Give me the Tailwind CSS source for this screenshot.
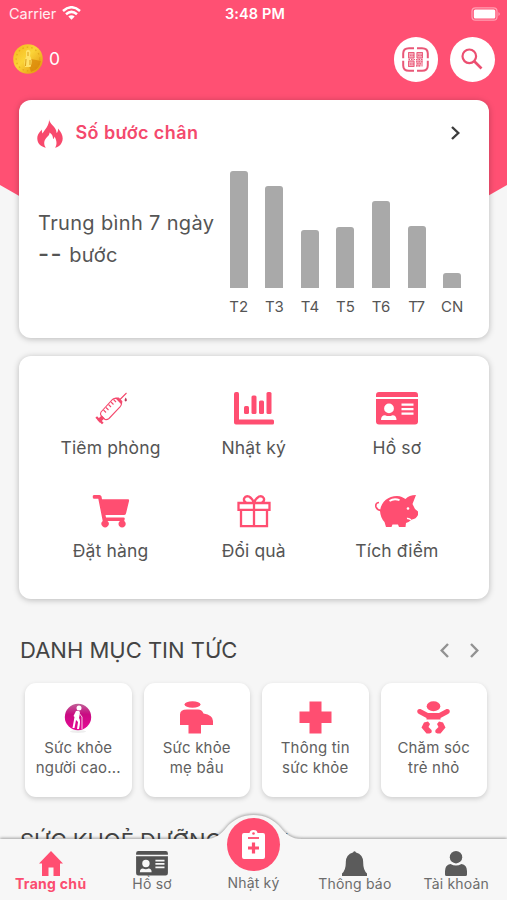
<!DOCTYPE html>
<html lang="vi">
<head>
<meta charset="utf-8">
<meta name="viewport" content="width=device-width, initial-scale=1">
<title>Trang chủ</title>
<script src="https://cdn.jsdelivr.net/npm/@tailwindcss/browser@4"></script>
</head>
<body class="bg-[#f6f6f6] overflow-hidden">
<svg class="hidden">
  <defs>
    <symbol id="idcard" viewBox="0 0 42 33">
      <path fill-rule="evenodd" d="M3 0H39Q42 0 42 3V5H0V3Q0 0 3 0ZM0 7H42V29.500Q42 32.500 39 32.500H3Q0 32.500 0 29.500ZM13 11.500A4.900 4.900 0 1 0 13 21.300A4.900 4.900 0 1 0 13 11.500ZM5 28H20.500Q20.500 23.200 16.500 23.200Q13 25 9 23.200Q5 23.200 5 28ZM25.500 11.500V13.700H37.500V11.500ZM25.500 16V18.200H37.500V16ZM25.500 20.500V22.700H37.500V20.500Z"/>
    </symbol>
  </defs>
</svg>
<div class="relative w-[507px] h-[900px] overflow-hidden font-['Inter','Liberation_Sans',sans-serif] text-[#555]">
  <div class="absolute inset-x-0 top-0 h-[330px] bg-[#ff5073] [clip-path:polygon(0_0,100%_0,100%_185px,50%_330px,0_185px)]"></div>

  <div class="relative flex flex-col">
    <header class="h-[100px] text-white">
      <div class="h-7 flex items-center justify-between pl-[9px] pr-[6px]">
        <div class="w-[100px] flex items-center gap-[6px] text-[14.500px] leading-7 text-white/90">
          <span class="tracking-[-0.050px]">Carrier</span>
          <svg class="w-[19px] h-[14px] -mt-[2px]" viewBox="0 0 19 14" fill="none" stroke="#fff" stroke-width="2.500"><path d="M1 5Q9.500-2.500 18 5M4 8.300Q9.500 3.500 15 8.300"/><path d="M6.300 10.600Q9.500 8 12.700 10.600L9.500 13.800Z" fill="#fff" stroke="none"/></svg>
        </div>
        <span class="text-[14.500px] font-semibold tracking-[0.15px]">3:48 PM</span>
        <div class="w-[100px] flex justify-end">
          <svg class="w-[30px] h-[14px]" viewBox="0 0 30 14"><rect x="1" y=".8" width="25" height="12.400" rx="3.500" fill="none" stroke="#fff" stroke-opacity=".45" stroke-width="1.200"/><rect x="2.800" y="2.500" width="21.500" height="9" rx="1.500" fill="#fff"/><path d="M27.500 5Q30 7 27.500 9Z" fill="#fff" fill-opacity=".5"/></svg>
        </div>
      </div>
      <div class="flex items-center pl-[13px] pr-[12.500px] pt-[9px]">
        <svg class="w-[30px] h-[30px]" viewBox="0 0 30 30">
          <defs><linearGradient id="gold" x1="0" y1="0" x2="1" y2="1"><stop offset="0" stop-color="#f3b51c"/><stop offset=".45" stop-color="#fbd438"/><stop offset="1" stop-color="#df8c05"/></linearGradient></defs>
          <circle cx="15" cy="15" r="14.800" fill="url(#gold)"/>
          <circle cx="15" cy="15" r="11.800" fill="none" stroke="#d99a13" stroke-opacity=".6" stroke-width="1.300" stroke-dasharray="1.500 3"/>
          <path d="M18 15L28 17A14 14 0 0 1 18 28L16 22Z" fill="#d98508" opacity=".7"/>
          <path d="M13 7Q16 4 17.500 8L17 12Q20 16 17.500 23H12Q10.500 17 13 13Z" fill="#ffe26a"/>
          <path d="M15 8V12M13 15L12.500 22M17 16V21" stroke="#dba016" stroke-width="1" fill="none"/>
        </svg>
        <span class="ml-[6px] text-[17.500px] leading-6">0</span>
        <div class="ml-auto flex gap-3">
          <div class="size-[44.500px] rounded-full bg-white grid place-items-center">
            <svg class="w-[27px] h-[25px]" viewBox="0 0 27 25" fill="none" stroke="#e95777">
              <path stroke-width="2" d="M12 1.200H7Q1.200 1.200 1.200 6.500V11.200M15 1.200H20Q25.800 1.200 25.800 6.500V11.200M12 23.800H7Q1.200 23.800 1.200 18.500V13.800M15 23.800H20Q25.800 23.800 25.800 18.500V13.800"/>
              <path fill="#f5a9b9" stroke="none" d="M6 5H12.500V11.500H6ZM14.500 5H21V11.500H14.500ZM6 13.500H12.500V20H6ZM14 12.500H21V19.500H14Z"/>
              <path stroke-width=".9" d="M6.500 5.500H12V11H6.500ZM15 5.500H20.500V11H15ZM6.500 14H12V19.500H6.500Z"/>
              <path stroke-width="1.100" stroke-dasharray="1.500 1" d="M8 8.200H12M16 8.200H20M8 17H12M6.500 12.500H21M14 14.700H21M15 16.700H20M14 18.900H19"/>
            </svg>
          </div>
          <div class="size-[44.500px] rounded-full bg-white grid place-items-center">
            <svg class="size-[22px]" viewBox="0 0 22 22" fill="none" stroke="#ec4f71"><circle cx="8.300" cy="8.300" r="6.800" stroke-width="2.200"/><path d="M13 13L20.500 20.500" stroke-width="2.700"/></svg>
          </div>
        </div>
      </div>
    </header>

    <section class="mx-[19px] h-[238px] w-[469.500px] rounded-[12px] bg-white shadow-[0_1px_6px_rgba(0,0,0,0.25)]">
      <div class="h-[66px] flex items-center pl-[18px] pr-[28.500px]">
        <svg class="w-[26px] h-[29px]" viewBox="0 0 26 29" fill="#f8496c"><path d="M12 0C12 5 20 8 19.500 14C20.800 13 21.200 11.500 21 9.500C25.500 14 27 20 24.500 24C23 27 20.500 28.200 18 28.800C20.500 25 19.500 21 17.500 17.500C17.300 19 16.700 19.700 16 20C16.200 17.300 15 15 12.500 13.500C13 17 8 18.500 7.300 23C7 25 7.500 27 8.800 28.800C4 27.700 0 24.500 .3 19C.4 14.500 3.500 13 4.500 10.500C5 12 5.200 13.500 5.400 14.500C8.500 10 12.500 6 12 0Z"/></svg>
        <span class="ml-[12.500px] text-[18px] leading-6 font-semibold tracking-[0.4px] text-[#f4496d]">Số bước chân</span>
        <svg class="ml-auto w-[9px] h-[14px]" viewBox="0 0 9 14" fill="none" stroke="#3c3c3c" stroke-width="2.400"><path d="M1 1L7.300 7L1 13"/></svg>
      </div>
      <div class="flex">
        <div class="w-[202px] pl-[19px] pt-[41px] text-[20px] leading-8 tracking-[0.35px] whitespace-nowrap">
          <p>Trung bình 7 ngày</p>
          <p><span class="text-[24px] font-medium tracking-[1.500px] leading-none">--</span> bước</p>
        </div>
        <div class="grid grid-cols-7 w-[249px] h-[151px] text-[15px] leading-5">
          <div class="flex flex-col items-center justify-end"><div class="w-[18px] h-[117px] rounded-t-[3px] bg-[#a9a9a9]"></div><span class="mt-[9px]">T2</span></div>
          <div class="flex flex-col items-center justify-end"><div class="w-[18px] h-[102px] rounded-t-[3px] bg-[#a9a9a9]"></div><span class="mt-[9px]">T3</span></div>
          <div class="flex flex-col items-center justify-end"><div class="w-[18px] h-[58px] rounded-t-[3px] bg-[#a9a9a9]"></div><span class="mt-[9px]">T4</span></div>
          <div class="flex flex-col items-center justify-end"><div class="w-[18px] h-[61px] rounded-t-[3px] bg-[#a9a9a9]"></div><span class="mt-[9px]">T5</span></div>
          <div class="flex flex-col items-center justify-end"><div class="w-[18px] h-[87px] rounded-t-[3px] bg-[#a9a9a9]"></div><span class="mt-[9px]">T6</span></div>
          <div class="flex flex-col items-center justify-end"><div class="w-[18px] h-[62px] rounded-t-[3px] bg-[#a9a9a9]"></div><span class="mt-[9px]">T7</span></div>
          <div class="flex flex-col items-center justify-end"><div class="w-[18px] h-[15px] rounded-t-[3px] bg-[#a9a9a9]"></div><span class="mt-[9px]">CN</span></div>
        </div>
      </div>
    </section>

    <section class="mt-[18px] mx-[19px] h-[243px] w-[469.500px] rounded-[12px] bg-white shadow-[0_1px_6px_rgba(0,0,0,0.25)] px-[20px] pt-9 grid grid-cols-3 auto-rows-[68px] gap-y-[35px] text-[17.500px] leading-6 tracking-[0.15px]">
      <div class="flex flex-col items-center gap-[11px]">
        <svg class="w-[34px] h-[33px]" viewBox="0 0 34 33" fill="none" stroke="#f4496d" stroke-width="1.100"><path d="M7 20L18.500 7.500Q20.500 6 22.500 6.500L27.500 11.500Q27.500 13 26 15L15 26.500Q13 28 11 27.500L7 23.500Q6 22 7 20Z"/><path d="M22.500 6L24.500 6L27.800 9.500L27.500 11.500Z" fill="#f4496d"/><path d="M26 7.500L32.500 1M9.500 18L12 20.500M12 15.500L14.500 18M14.500 12.500L17 15M17 10L19.500 12.500M19.500 7.500L22 10"/><path d="M2.200 25L8.800 31.500" stroke-width="2.400"/><path d="M4.500 29.300L9 25" stroke-width="4"/><path d="M31.700 5.500Q34 9 31.700 9.500Q29.500 9 31.700 5.500Z" fill="#b93858" stroke="none"/></svg>
        <span>Tiêm phòng</span>
      </div>
      <div class="flex flex-col items-center gap-[11px]">
        <svg class="w-[40px] h-[33px]" viewBox="0 0 40 33" fill="#ff4e71"><path d="M2 0H3.500Q5 0 5 2V27.500H38.500Q40 27.500 40 29V31Q40 32.500 38.500 32.500H2Q0 32.500 0 30.500V2Q0 0 2 0Z"/><rect x="10" y="14" width="5" height="8" rx="1.500"/><rect x="17.500" y="3.500" width="5" height="18.500" rx="1.500"/><rect x="25" y="8.500" width="5" height="13.500" rx="1.500"/><rect x="32.500" y="0" width="5" height="22" rx="1.500"/></svg>
        <span>Nhật ký</span>
      </div>
      <div class="flex flex-col items-center gap-[11px]">
        <svg class="w-[42px] h-[33px]" fill="#ff4e71"><use href="#idcard"/></svg>
        <span>Hồ sơ</span>
      </div>
      <div class="flex flex-col items-center gap-[11px]">
        <svg class="w-[37px] h-[33px] translate-x-[0.5px]" viewBox="0 0 37 33" fill="#ff4e71"><path d="M1.500 0H7Q8.500 0 9 1.500L9.500 4.200H35.500Q37 4.200 36.600 5.800L33.500 18.500Q33 20 31.500 20H13L13.500 22.500H31Q32.500 22.500 32.200 24L31.700 26A3.600 3.600 0 1 1 27.500 26H15A3.600 3.600 0 1 1 10.200 26L5.800 3.700H1.500Q0 3.700 0 2V1.500Q0 0 1.500 0Z"/></svg>
        <span>Đặt hàng</span>
      </div>
      <div class="flex flex-col items-center gap-[11px]">
        <svg class="w-[34px] h-[33px]" viewBox="0 0 34 33" fill="none" stroke="#ff4e71" stroke-width="2.300"><path d="M1.500 8H32.500V14.800H1.500ZM4 15V31.200H30V15M17 8V31M16.500 8H10Q6 6.500 7.200 3.200Q8.500 .5 12 1.500Q15.500 3.500 17 8Q18.500 3.500 22 1.500Q25.500 .5 26.800 3.200Q28 6.500 24 8Z"/></svg>
        <span>Đổi quà</span>
      </div>
      <div class="flex flex-col items-center gap-[11px]">
        <svg class="w-[43px] h-[33px]" viewBox="0 0 43 33"><path fill="#ff4e71" d="M5 16C6 7 13 1 22 1C26 1 28 2.500 30.500 4Q34 0 41 0L37.500 9Q39 12 40 14L43 16.500V20Q41 24 37 24.500Q34 27 31 28L30.500 32H24L23 29.500H17.500L16.500 32H11L9.500 27Q5.500 23 5 16Z"/><path fill="none" stroke="#ff4e71" stroke-width="1.700" d="M4 7.500Q0 8 1 12Q2 15 6 15.500"/><path fill="none" stroke="#fff" stroke-width="1.800" d="M14.500 6Q19 3 24.500 5.200"/><circle cx="33" cy="13.500" r="1.300" fill="#fff"/><path d="M32 23.500Q34 23 36 25" fill="none" stroke="#fff" stroke-width="1.500"/></svg>
        <span>Tích điểm</span>
      </div>
    </section>

    <section>
      <div class="mt-[35px] h-8 flex items-center pl-[20px] pr-[28px]">
        <h2 class="text-[22px] leading-8 text-[#444]">DANH MỤC TIN TỨC</h2>
        <div class="ml-auto flex gap-[21px]">
          <svg class="w-[9px] h-[15px]" viewBox="0 0 9 15" fill="none" stroke="#929292" stroke-width="2.400"><path d="M8 1L1.700 7.500L8 14"/></svg>
          <svg class="w-[9px] h-[15px]" viewBox="0 0 9 15" fill="none" stroke="#929292" stroke-width="2.400"><path d="M1 1L7.300 7.500L1 14"/></svg>
        </div>
      </div>
      <div class="mt-[16.500px] ml-[25px] flex gap-[12px] text-[15px] leading-5 tracking-[0.2px] text-center whitespace-nowrap text-[#606060]">
        <article class="w-[106.500px] h-[114.500px] rounded-[11px] bg-white shadow-[0_2px_5px_rgba(0,0,0,0.16)] pt-[18px] flex flex-col items-center">
          <svg class="w-[28px] h-[33px] mb-[4px]" viewBox="0 0 28 33"><defs><linearGradient id="orb" x2="0" y2="1"><stop stop-color="#c06096"/><stop offset=".4" stop-color="#c90b82"/><stop offset="1" stop-color="#e80896"/></linearGradient></defs><ellipse cx="14" cy="30.500" rx="8" ry="1.500" fill="#eee"/><circle cx="14" cy="16" r="13.200" fill="url(#orb)"/><circle cx="15" cy="7" r="2.500" fill="#fff"/><path d="M12 10Q16 9 16 12L15 17Q17 19 15 28H13L14 21L12 19L10.500 27H8.500L10.500 16L9.500 15Z" fill="#fff"/><path d="M15 12L18 16V28" stroke="#f8cee5" stroke-width="1" fill="none"/></svg>
          <p>Sức khỏe<br>người cao...</p>
        </article>
        <article class="w-[106.500px] h-[114.500px] rounded-[11px] bg-white shadow-[0_2px_5px_rgba(0,0,0,0.16)] pt-[18px] flex flex-col items-center">
          <svg class="w-[33px] h-[33px] mb-[4px]" viewBox="0 0 33 33" fill="#ff4e71"><ellipse cx="12.500" cy="3.500" rx="8" ry="3.300"/><path d="M0 24V13.500Q0 8.500 7 8.500H18Q22 8.500 23.500 12.500Q33 14 33 20V24H21V32.500H8.500V24Z"/></svg>
          <p>Sức khỏe<br>mẹ bầu</p>
        </article>
        <article class="w-[106.500px] h-[114.500px] rounded-[11px] bg-white shadow-[0_2px_5px_rgba(0,0,0,0.16)] pt-[18px] flex flex-col items-center">
          <svg class="w-[33px] h-[33px] mb-[4px]" viewBox="0 0 33 33" fill="#ff4e71"><path d="M10.500 .5H22.500V10.500H32.500V22H22.500V32.500H10.500V22H.5V10.500H10.500Z"/></svg>
          <p>Thông tin<br>sức khỏe</p>
        </article>
        <article class="w-[106.500px] h-[114.500px] rounded-[11px] bg-white shadow-[0_2px_5px_rgba(0,0,0,0.16)] pt-[18px] flex flex-col items-center">
          <svg class="w-[33px] h-[33px] mb-[4px]" viewBox="0 0 33 33" fill="#ff4e71"><ellipse cx="16.500" cy="5.200" rx="6.800" ry="5"/><path d="M3.500 8Q.2 7.500 .2 10.500Q.3 12 2 13L9.500 17V18.500H23.500V17L31 13Q32.800 12 32.800 10.500Q32.800 7.500 29.500 8L22 12H11ZM7 21.500L11 20.500L13 23L11.500 26L14.500 29Q15.500 32 12.500 32.500H9.500L4.500 26.500ZM26 21.500L22 20.500L20 23L21.500 26L18.500 29Q17.500 32 20.500 32.500H23.500L28.500 26.500Z"/></svg>
          <p>Chăm sóc<br>trẻ nhỏ</p>
        </article>
      </div>
      <h2 class="mt-[27.500px] pl-[20px] text-[22px] leading-8 text-[#444]">SỨC KHOẺ DƯỠNG CHẤT</h2>
    </section>
  </div>

  <nav class="absolute inset-x-0 bottom-0 h-[92px]">
    <svg class="absolute inset-0 w-[507px] h-[92px] [filter:drop-shadow(0_-1px_1.500px_rgba(0,0,0,0.35))]" viewBox="0 0 507 92"><path fill="#f7f7f7" d="M0 31H205C216 31 221 26 226 20C239 2.500 268 2.500 281 20C286 26 291 31 302 31H507V92H0Z"/></svg>
    <div class="relative h-full grid grid-cols-5 text-[14px] leading-5 tracking-[0.2px] text-[#6c6c6c] text-center">
      <div class="flex flex-col items-center pt-[43px] text-[#fb4d70] font-bold">
        <svg class="w-[24px] h-[25px]" viewBox="0 0 24 25" fill="#ff4e71"><path d="M12 0L24 12.500H21V25H14.500V16.500H9.500V25H3V12.500H0Z"/></svg>
        <span class="-mt-[2px] tracking-[0.3px]">Trang chủ</span>
      </div>
      <div class="flex flex-col items-center pt-[43px]">
        <svg class="w-[32px] h-[25px]" fill="#535353"><use href="#idcard"/></svg>
        <span class="-mt-[2px]">Hồ sơ</span>
      </div>
      <div class="flex flex-col items-center pt-[10px]">
        <div class="size-[53px] rounded-full bg-[#ff4e71] grid place-items-center">
          <svg class="w-[23px] h-[29px]" viewBox="0 0 23 29"><path fill="#fff" d="M2 3H7.500Q8 0 11.500 0Q15 0 15.500 3H21Q23 3 23 5V27Q23 29 21 29H2Q0 29 0 27V5Q0 3 2 3Z"/><circle cx="11.500" cy="3.500" r="1.300" fill="#ff4e71"/><path d="M6 8H17" stroke="#ff4e71" stroke-width="1.800" fill="none"/><path d="M11.500 12.500V23.500M6 18H17" stroke="#ff4e71" stroke-width="3.200" fill="none"/></svg>
        </div>
        <span class="mt-[2px]">Nhật ký</span>
      </div>
      <div class="flex flex-col items-center pt-[43px]">
        <svg class="w-[25px] h-[25px]" viewBox="0 0 25 25" fill="#5b5b5b"><path d="M11 1.500Q12.500-1 14 1.500Q21 3.500 21.200 11Q21 19 25 22.500V25H0V22.500Q4 19 3.800 11Q4 3.500 11 1.500Z"/></svg>
        <span class="-mt-[2px]">Thông báo</span>
      </div>
      <div class="flex flex-col items-center pt-[43px]">
        <svg class="w-[22px] h-[25px]" viewBox="0 0 22 25" fill="#5b5b5b"><circle cx="11" cy="6.200" r="6.200"/><path d="M5.500 13Q11 16 16.500 13Q22 14 22 20V23.500Q22 25 20.500 25H1.500Q0 25 0 23.500V20Q0 14 5.500 13Z"/></svg>
        <span class="-mt-[2px]">Tài khoản</span>
      </div>
    </div>
  </nav>
</div>
</body>
</html>
